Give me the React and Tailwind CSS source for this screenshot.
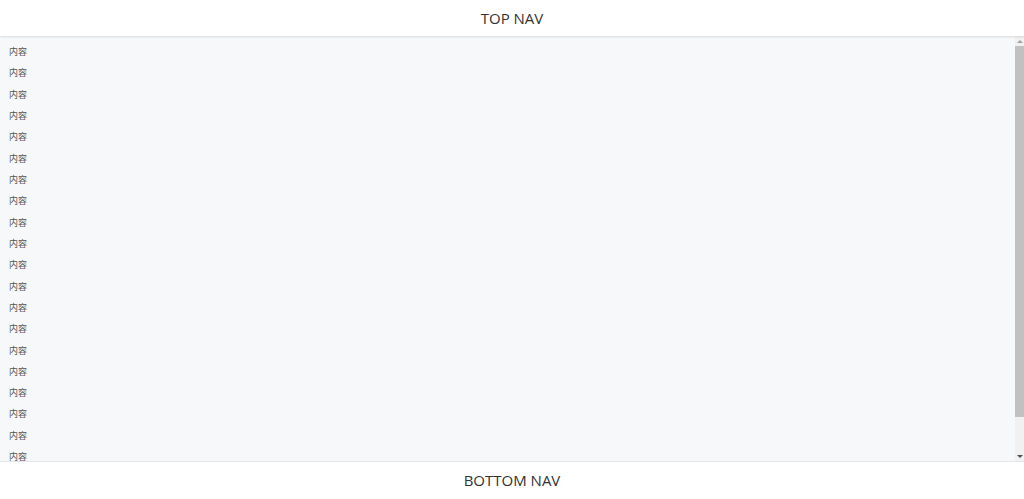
export default function App() {
  const items = Array.from({ length: 21 }, (_, i) => i);

  return (
    <div
      className="flex h-[499px] w-full flex-col bg-white text-[#333]"
      style={{ fontFamily: '"Open Sans", "Noto Sans CJK SC", sans-serif' }}
    >
      {/* top nav */}
      <header className="z-10 flex h-[36px] shrink-0 items-center justify-center bg-white text-[15px] shadow-[0_1px_2px_rgba(0,0,0,0.12)]">
        TOP NAV
      </header>

      {/* content + scrollbar */}
      <div className="flex min-h-0 flex-1">
        <main className="min-h-0 flex-1 overflow-hidden bg-[#f7f8fa] pt-[5px]">
          {items.map((i) => (
            <div
              key={i}
              className="flex h-[21.33px] items-center px-[9px] text-[9px] text-[#555]"
              style={{ fontFamily: '"Noto Sans CJK SC", sans-serif' }}
            >
              内容
            </div>
          ))}
        </main>

        {/* scrollbar */}
        <div className="flex w-[9px] shrink-0 flex-col bg-[#f1f1f1]">
          <div className="flex h-[10px] items-center justify-center">
            <div className="h-0 w-0 border-x-[3px] border-b-[3px] border-x-transparent border-b-[#a3a3a3]" />
          </div>
          <div className="h-[371px] bg-[#c1c1c1]" />
          <div className="flex-1" />
          <div className="flex h-[10px] items-center justify-center">
            <div className="h-0 w-0 border-x-[3px] border-t-[3px] border-x-transparent border-t-[#505050]" />
          </div>
        </div>
      </div>

      {/* bottom nav */}
      <footer className="flex h-[38px] shrink-0 items-center justify-center border-t border-[#e5e6e8] bg-white text-[15px]">
        BOTTOM NAV
      </footer>
    </div>
  );
}
